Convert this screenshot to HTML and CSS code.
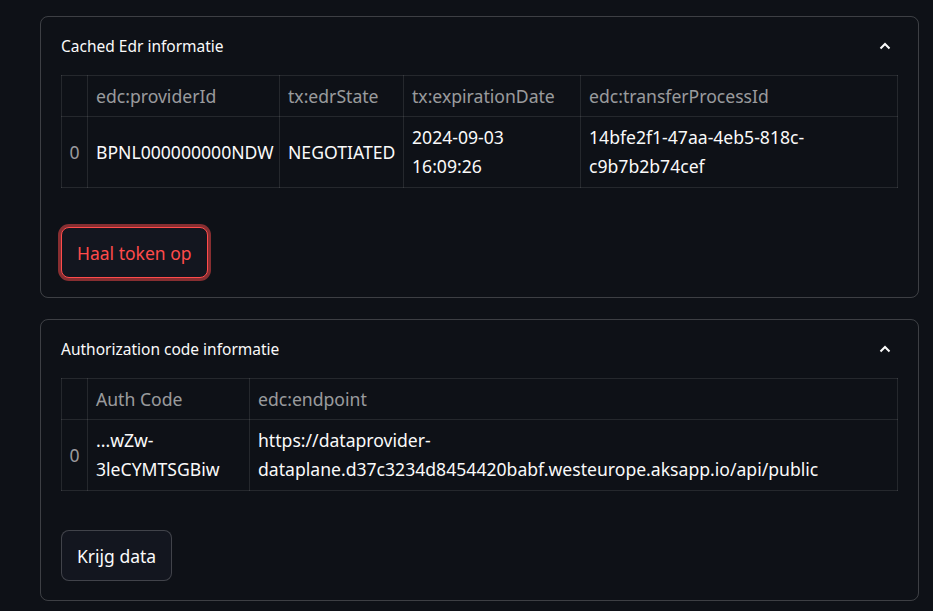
FILE: index.html
```html
<!DOCTYPE html>
<html>
<head>
<meta charset="utf-8">
<link rel="stylesheet" href="styles.css">
</head>
<body>
<div class="page">
  <section class="expander">
    <div class="exp-head">
      <span class="exp-title">Cached Edr informatie</span>
      <svg class="chev" width="12" height="8" viewBox="0 0 12 8"><path d="M1.5 6.5 L6 2 L10.5 6.5" fill="none" stroke="#fafafa" stroke-width="2"/></svg>
    </div>
    <div class="exp-body">
      <table class="grid grid1">
        <thead>
          <tr><th class="idx"></th><th>edc:providerId</th><th>tx:edrState</th><th>tx:expirationDate</th><th>edc:transferProcessId</th></tr>
        </thead>
        <tbody>
          <tr><td class="idx">0</td><td>BPNL000000000NDW</td><td>NEGOTIATED</td><td>2024-09-03<br>16:09:26</td><td>14bfe2f1-47aa-4eb5-818c-<br>c9b7b2b74cef</td></tr>
        </tbody>
      </table>
      <button class="btn btn-focus">Haal token op</button>
    </div>
  </section>
  <section class="expander">
    <div class="exp-head">
      <span class="exp-title">Authorization code informatie</span>
      <svg class="chev" width="12" height="8" viewBox="0 0 12 8"><path d="M1.5 6.5 L6 2 L10.5 6.5" fill="none" stroke="#fafafa" stroke-width="2"/></svg>
    </div>
    <div class="exp-body">
      <table class="grid grid2">
        <thead>
          <tr><th class="idx"></th><th>Auth Code</th><th>edc:endpoint</th></tr>
        </thead>
        <tbody>
          <tr><td class="idx">0</td><td>...wZw-<br>3leCYMTSGBiw</td><td>https://dataprovider-<br>dataplane.d37c3234d8454420babf.westeurope.aksapp.io/api/public</td></tr>
        </tbody>
      </table>
      <button class="btn">Krijg data</button>
    </div>
  </section>
</div>
</body>
</html>
```
FILE: styles.css
```css
html, body {
  margin: 0;
  padding: 0;
  background: #0e1117;
  color: #fafafa;
  font-family: "Noto Sans", Lato, sans-serif;
}
.page {
  padding: 16px 14px 0 40px;
  display: flex;
  flex-direction: column;
  gap: 21px;
}
.expander {
  border: 1px solid rgba(250, 250, 250, 0.2);
  border-radius: 8px;
  width: 877px;
}
.exp-head {
  display: flex;
  align-items: center;
  justify-content: space-between;
  padding: 17px 27px 17px 20px;
  height: 24px;
}
.exp-title {
  font-size: 15.5px;
  line-height: 24px;
}
.chev { display: block; }
.exp-body {
  padding: 0 20px 19px 20px;
}
.grid {
  width: 837px;
  border-collapse: collapse;
  font-size: 17.6px;
  table-layout: fixed;
}
.grid th, .grid td {
  box-sizing: border-box;
  border: 1px solid rgba(250, 250, 250, 0.1);
  text-align: left;
  padding: 0 8px;
  vertical-align: middle;
  white-space: nowrap;
}
.grid th {
  height: 41px;
  font-weight: 400;
  color: rgba(250, 250, 250, 0.6);
}
.grid td {
  height: 71px;
  line-height: 29px;
  color: #fafafa;
}
.grid .idx {
  width: 26px;
  padding: 0;
  text-align: center;
  color: rgba(250, 250, 250, 0.6);
}
.grid1 th:nth-child(2) { width: 192px; }
.grid1 th:nth-child(3) { width: 124px; }
.grid1 th:nth-child(4) { width: 177px; }
.grid2 th:nth-child(2) { width: 162px; }
.btn {
  display: block;
  margin-top: 39px;
  height: 51px;
  padding: 0 15px;
  border-radius: 8px;
  background: #13161f;
  border: 1px solid rgba(250, 250, 250, 0.2);
  color: #fafafa;
  font-family: inherit;
  font-size: 17.5px;
}
.btn-focus {
  border-color: #ff4b4b;
  color: #ff4b4b;
  box-shadow: 0 0 0 3px rgba(255, 75, 75, 0.5);
}
```
